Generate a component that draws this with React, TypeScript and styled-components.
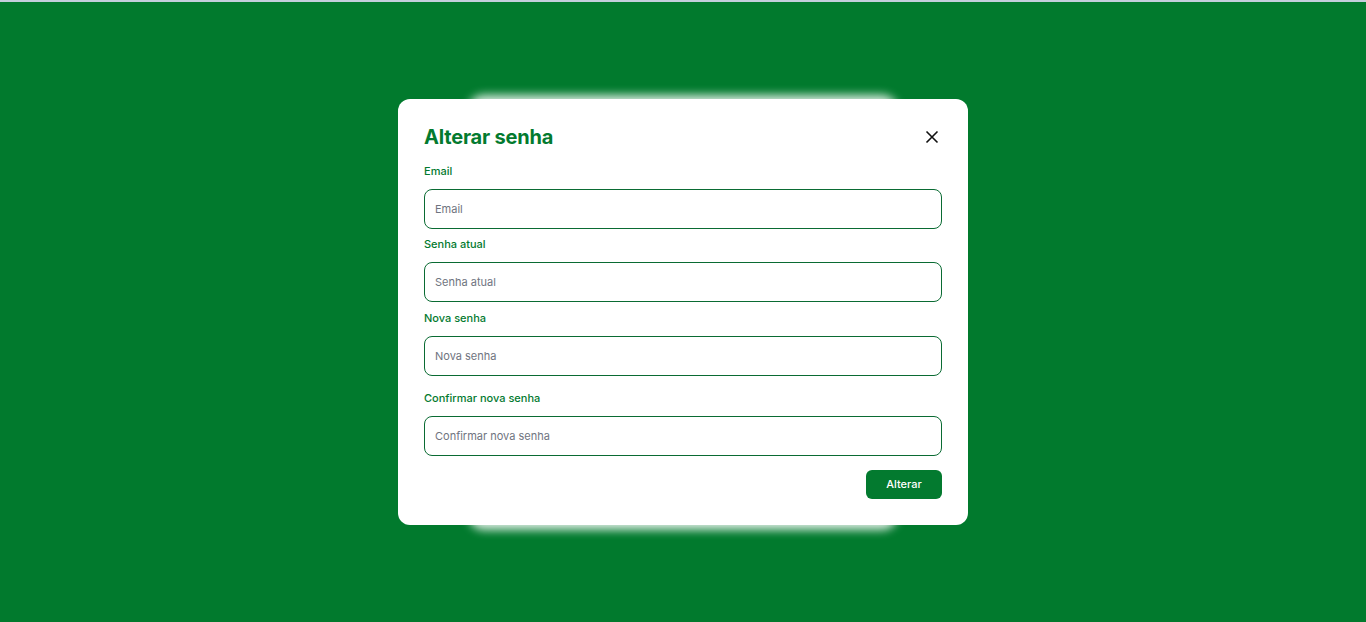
import React from "react";
import styled, { createGlobalStyle } from "styled-components";

const GlobalStyle = createGlobalStyle`
  html, body {
    margin: 0;
    padding: 0;
    height: 100%;
  }
  body {
    font-family: Inter, "Noto Sans", sans-serif;
    background: #017a2d;
  }
  #root {
    height: 100%;
  }
`;

const Page = styled.div`
  height: 622px;
  background: #017a2d;
  border-top: 2px solid #c3cfdc;
  box-sizing: border-box;
  display: flex;
  align-items: center;
  justify-content: center;
`;

const Stage = styled.div`
  position: relative;
  margin-top: -1px;
`;

const Glow = styled.div`
  position: absolute;
  left: 70px;
  right: 70px;
  top: -4px;
  bottom: -5px;
  background: rgba(255, 255, 255, 0.85);
  border-radius: 16px;
  filter: blur(5px);
`;

const Modal = styled.div`
  position: relative;
  width: 570px;
  box-sizing: border-box;
  background: #fff;
  border-radius: 12px;
  padding: 24px 26px 26px;
  display: flex;
  flex-direction: column;
`;

const Header = styled.div`
  display: flex;
  align-items: center;
  justify-content: space-between;
  margin-bottom: 12px;
`;

const Title = styled.h2`
  margin: 0;
  font-size: 20px;
  font-weight: 700;
  letter-spacing: -0.2px;
  color: #037a2f;
  line-height: 28px;
`;

const Close = styled.button`
  border: 0;
  background: none;
  padding: 0;
  width: 18px;
  height: 18px;
  display: flex;
  align-items: center;
  justify-content: center;
  cursor: pointer;
  margin-right: 1px;
`;

const Field = styled.label<{ $gap?: number }>`
  display: flex;
  flex-direction: column;
  margin-top: ${(p) => p.$gap ?? 0}px;
`;

const LabelText = styled.span`
  font-size: 11px;
  font-weight: 500;
  color: #037a2f;
  line-height: 16px;
  margin-bottom: 10px;
`;

const Input = styled.input`
  height: 40px;
  box-sizing: border-box;
  border: 1px solid #0a6b33;
  border-radius: 8px;
  padding: 0 10px;
  font-family: inherit;
  font-size: 11px;
  color: #333;
  outline: none;
  &::placeholder {
    color: #6f7480;
  }
`;

const Footer = styled.div`
  display: flex;
  justify-content: flex-end;
  margin-top: 14px;
`;

const Button = styled.button`
  width: 76px;
  height: 29px;
  border: 0;
  border-radius: 6px;
  background: #037a2f;
  color: #fff;
  font-family: inherit;
  font-size: 11px;
  font-weight: 500;
  cursor: pointer;
`;

const fields = [
  { label: "Email", type: "email", gap: 0 },
  { label: "Senha atual", type: "password", gap: 7 },
  { label: "Nova senha", type: "password", gap: 8 },
  { label: "Confirmar nova senha", type: "password", gap: 14 },
];

export default function App() {
  return (
    <>
      <GlobalStyle />
      <Page>
        <Stage>
          <Glow />
          <Modal>
            <Header>
              <Title>Alterar senha</Title>
              <Close aria-label="Fechar">
                <svg width="14" height="14" viewBox="0 0 14 14">
                  <path d="M1.5 1.5 L12.5 12.5 M12.5 1.5 L1.5 12.5" stroke="#111" strokeWidth="1.6" />
                </svg>
              </Close>
            </Header>
            {fields.map((f) => (
              <Field key={f.label} $gap={f.gap}>
                <LabelText>{f.label}</LabelText>
                <Input type={f.type} placeholder={f.label} />
              </Field>
            ))}
            <Footer>
              <Button>Alterar</Button>
            </Footer>
          </Modal>
        </Stage>
      </Page>
    </>
  );
}
